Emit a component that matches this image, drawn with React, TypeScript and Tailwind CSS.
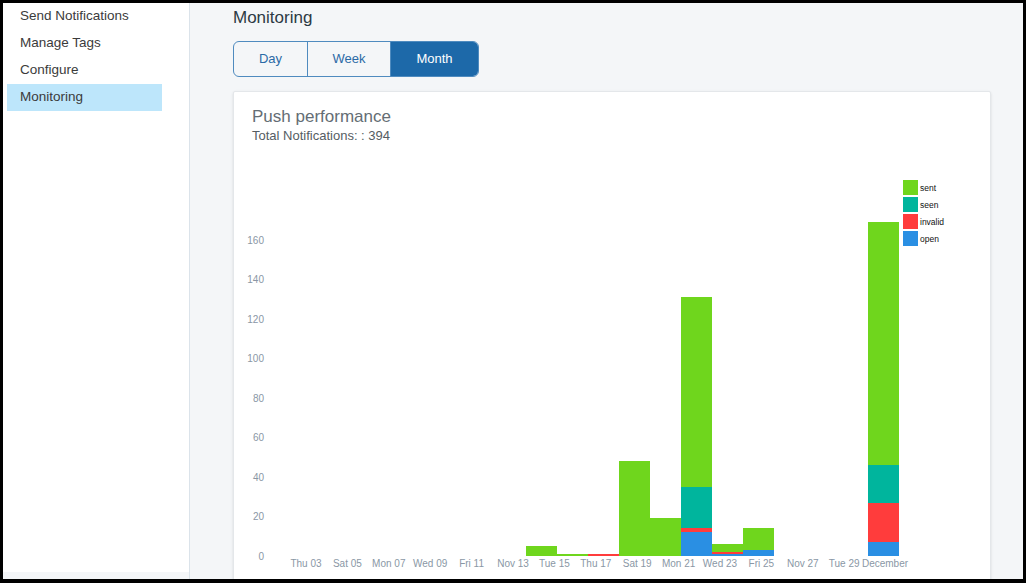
import React from 'react';

const GREEN = '#6fd61d';
const TEAL = '#00b59d';
const RED = '#ff3c3c';
const BLUE = '#2a8fe3';

const K = 1.975; // px per notification
const BASE = 556; // y of zero

const navItems = ['Send Notifications', 'Manage Tags', 'Configure', 'Monitoring'];

const bars = [
  { x: 526, open: 0, invalid: 0, seen: 0, sent: 5 },
  { x: 557, open: 0, invalid: 0, seen: 0, sent: 1 },
  { x: 588, open: 0, invalid: 1, seen: 0, sent: 0 },
  { x: 619, open: 0, invalid: 0, seen: 0, sent: 48 },
  { x: 650, open: 0, invalid: 0, seen: 0, sent: 19 },
  { x: 681, open: 12, invalid: 2, seen: 21, sent: 96 },
  { x: 712, open: 1, invalid: 1, seen: 0, sent: 4 },
  { x: 743, open: 3, invalid: 0, seen: 0, sent: 11 },
  { x: 868, open: 7, invalid: 20, seen: 19, sent: 123 },
];

const xLabels = [
  'Thu 03', 'Sat 05', 'Mon 07', 'Wed 09', 'Fri 11', 'Nov 13', 'Tue 15',
  'Thu 17', 'Sat 19', 'Mon 21', 'Wed 23', 'Fri 25', 'Nov 27', 'Tue 29',
];

const legend = [
  { label: 'sent', color: GREEN },
  { label: 'seen', color: TEAL },
  { label: 'invalid', color: RED },
  { label: 'open', color: BLUE },
];

function Chart() {
  return (
    <svg width={756} height={440} viewBox="234 144 756 440" className="block -mx-[18px]">
      {[0, 20, 40, 60, 80, 100, 120, 140, 160].map((v) => (
        <text key={v} x={264} y={BASE - v * K + 3.5} textAnchor="end" fontSize={10} fill="#8a97a5">
          {v}
        </text>
      ))}
      {xLabels.map((l, i) => (
        <text key={l} x={306 + i * 41.4} y={566.5} textAnchor="middle" fontSize={10} fill="#8a97a5">
          {l}
        </text>
      ))}
      <text x={885} y={566.5} textAnchor="middle" fontSize={10} fill="#8a97a5">
        December
      </text>
      {bars.map((b) => {
        const segs = [
          { v: b.open, c: BLUE },
          { v: b.invalid, c: RED },
          { v: b.seen, c: TEAL },
          { v: b.sent, c: GREEN },
        ];
        let acc = 0;
        return (
          <g key={b.x} shapeRendering="crispEdges">
            {segs.map((s, i) => {
              if (!s.v) return null;
              const top = Math.round(BASE - (acc + s.v) * K);
              const bottom = Math.round(BASE - acc * K);
              acc += s.v;
              return <rect key={i} x={b.x} y={top} width={31} height={Math.max(1, bottom - top)} fill={s.c} />;
            })}
          </g>
        );
      })}
      {legend.map((l, i) => (
        <g key={l.label}>
          <rect x={903} y={180 + i * 17} width={15} height={15} fill={l.color} />
          <text x={920} y={190.5 + i * 17} fontSize={8.5} fill="#111">
            {l.label}
          </text>
        </g>
      ))}
    </svg>
  );
}

export default function App() {
  return (
    <div className="w-[1026px] h-[583px] bg-black pt-[3px] pl-[3px] pr-[3px] pb-[4px] overflow-hidden font-['Liberation_Sans',Arial,sans-serif]">
      <div className="flex h-full">
        <aside className="w-[187px] flex flex-col border-r border-[#dbe3ea] bg-white">
          <nav className="flex-1">
            {navItems.map((item) => (
              <div
                key={item}
                className={`h-[27px] ml-[4px] w-[155px] pl-[13px] flex items-center text-[13.5px] text-[#3b3b3b] ${
                  item === 'Monitoring' ? 'bg-[#bde6fb]' : ''
                }`}
              >
                {item}
              </div>
            ))}
          </nav>
          <div className="h-[7px] bg-[#f4f6f8]" />
        </aside>

        <main className="flex-1 bg-[#f4f6f8] pl-[43px] pr-[32px] pt-[5px] overflow-hidden">
          <h1 className="text-[17px] leading-5 text-[#2c3a44]">Monitoring</h1>

          <div className="mt-[13px] inline-flex h-[36px] border border-[#4f8bbf] rounded-[6px] overflow-hidden text-[13px]">
            <button className="w-[74px] border-r border-[#4f8bbf] text-[#2b6aa6]">Day</button>
            <button className="w-[83px] border-r border-[#4f8bbf] text-[#2b6aa6]">Week</button>
            <button className="w-[87px] bg-[#1d69a9] text-white">Month</button>
          </div>

          <div className="mt-[14px] bg-white border border-[#e4e7ea] rounded-[2px] shadow-sm px-[18px] pt-[15px] pb-8">
            <div className="text-[17px] leading-5 text-[#646d74]">Push performance</div>
            <div className="mt-px text-[13px] leading-4 text-[#555d63]">Total Notifications: : 394</div>
            <Chart />
          </div>
        </main>
      </div>
    </div>
  );
}
